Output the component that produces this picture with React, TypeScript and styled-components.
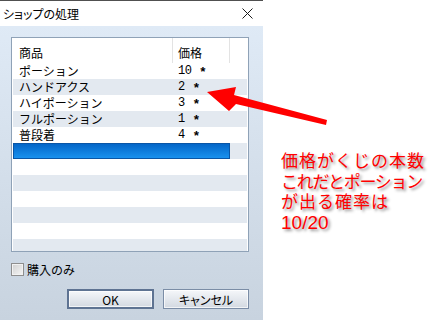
import React from "react";
import styled, { createGlobalStyle } from "styled-components";

const Global = createGlobalStyle`
  html, body { margin: 0; padding: 0; background: #ffffff; }
  body { width: 446px; height: 320px; overflow: hidden; }
`;

const UI_FONT = `"Noto Sans CJK JP", "Noto Sans", sans-serif`;

const Page = styled.div`
  position: relative;
  display: flex;
  width: 446px;
  height: 320px;
  font-family: ${UI_FONT};
  color: #000;
`;

const Dialog = styled.div`
  width: 263px;
  height: 320px;
  box-sizing: border-box;
  border-top: 1px solid #505050;
  display: flex;
  flex-direction: column;
`;

const TitleBar = styled.div`
  height: 25px;
  flex: none;
  background: #ffffff;
  display: flex;
  align-items: center;
  justify-content: space-between;
  padding: 0 10px 0 3px;
`;

const Title = styled.span`
  font-size: 12px;
  font-feature-settings: "palt";
  line-height: 1;
  margin-top: 1px;
`;

const Body = styled.div`
  flex: 1;
  background: linear-gradient(#dfeaf6, #c8d3df);
  padding: 11px 14px 0 11px;
  display: flex;
  flex-direction: column;
`;

const List = styled.div`
  height: 215px;
  box-sizing: border-box;
  border: 1px solid #8fa2b7;
  background: #ffffff;
  padding: 0 1px;
  overflow: hidden;
`;

const Columns = `
  display: grid;
  grid-template-columns: 160px 57px 1fr;
`;

const Header = styled.div`
  ${Columns};
  height: 25px;
`;

const HeadCell = styled.div<{ $pad: number; $line?: boolean }>`
  display: flex;
  align-items: center;
  padding: 3px 0 0 ${(p) => p.$pad}px;
  font-size: 12px;
  border-right: ${(p) => (p.$line ? "1px solid #e3e3e3" : "none")};
`;

const Row = styled.div<{ $alt: boolean }>`
  ${Columns};
  height: 16px;
  flex: none;
  background: ${(p) => (p.$alt ? "#e3e9f0" : "#ffffff")};
`;

const Cell = styled.div<{ $pad: number }>`
  display: flex;
  align-items: center;
  padding-left: ${(p) => p.$pad}px;
  font-size: 12px;
  line-height: 16px;
  white-space: nowrap;
`;

const Price = styled(Cell)`
  font-family: "Liberation Mono", "DejaVu Sans Mono", monospace;
  font-size: 12px;
  letter-spacing: -0.5px;
`;

const Star = styled.span`
  position: relative;
  top: 2px;
  font-weight: bold;
  font-size: 13px;
  margin-left: 1px;
`;

const Selection = styled.div`
  grid-column: 1 / 3;
  box-sizing: border-box;
  border: 1px solid #0a56a6;
  background: linear-gradient(#0466c8, #1991ee);
`;

const CheckRow = styled.label`
  display: flex;
  align-items: center;
  gap: 3px;
  margin-top: 11px;
  font-size: 12px;
  height: 13px;
`;

const CheckBox = styled.span`
  width: 13px;
  height: 13px;
  box-sizing: border-box;
  border: 1px solid #8e8e8e;
  background: linear-gradient(135deg, #d0d0d0, #f6f6f6);
  box-shadow: inset 0 0 0 1px #f2f2f2;
`;

const Buttons = styled.div`
  display: flex;
  justify-content: flex-end;
  gap: 9px;
  margin-top: 13px;
`;

const Button = styled.button<{ $default?: boolean; $w: number }>`
  width: ${(p) => p.$w}px;
  height: 20px;
  box-sizing: border-box;
  padding: 0;
  font-family: ${UI_FONT};
  font-size: 12px;
  font-feature-settings: "palt";
  color: #000;
  border: ${(p) => (p.$default ? "2px solid #5e7392" : "1px solid #7b8da6")};
  background: linear-gradient(#f5f7fa, #d3d9e1);
  box-shadow: inset 0 0 0 1px rgba(255, 255, 255, 0.7);
  display: flex;
  align-items: center;
  justify-content: center;
`;

const Aside = styled.div`
  padding: 150px 0 0 18px;
  font-family: "Noto Sans CJK JP", sans-serif;
  font-size: 17px;
  line-height: 20.5px;
  letter-spacing: 1px;
  color: #ff0000;
  text-shadow: 2px 2px 3px rgba(0, 0, 0, 0.45);
  white-space: nowrap;
`;

const Line = styled.div<{ $tight?: boolean }>`
  height: 20.5px;
  letter-spacing: ${(p) => (p.$tight ? "-1.3px" : "1px")};
`;

const Latin = styled.span`
  font-family: "Liberation Sans", Arial, sans-serif;
  font-size: 19px;
  letter-spacing: 0;
`;

const Overlay = styled.svg`
  position: absolute;
  left: 0;
  top: 0;
  pointer-events: none;
`;

const items: [string, string][] = [
  ["ポーション", "10"],
  ["ハンドアクス", "2"],
  ["ハイポーション", "3"],
  ["フルポーション", "1"],
  ["普段着", "4"],
];

export default function App() {
  const empties = Array.from({ length: 6 }, (_, i) => i);
  return (
    <Page>
      <Global />
      <Dialog>
        <TitleBar>
          <Title>ショップの処理</Title>
          <svg width="11" height="11" viewBox="0 0 11 11">
            <path d="M0.5 0.5 L10.5 10.5 M10.5 0.5 L0.5 10.5" stroke="#1a1a1a" strokeWidth="1" />
          </svg>
        </TitleBar>
        <Body>
          <List>
            <Header>
              <HeadCell $pad={6} $line>商品</HeadCell>
              <HeadCell $pad={5} $line>価格</HeadCell>
              <HeadCell $pad={0} />
            </Header>
            {items.map(([name, price], i) => (
              <Row key={name} $alt={i % 2 === 1}>
                <Cell $pad={6}>{name}</Cell>
                <Price $pad={5}>
                  {price}&nbsp;<Star>*</Star>
                </Price>
                <Cell $pad={0} />
              </Row>
            ))}
            <Row $alt>
              <Selection />
              <Cell $pad={0} />
            </Row>
            {empties.map((i) => (
              <Row key={i} $alt={i % 2 === 1}>
                <Cell $pad={0} />
              </Row>
            ))}
          </List>
          <CheckRow>
            <CheckBox />
            購入のみ
          </CheckRow>
          <Buttons>
            <Button $default $w={87}>OK</Button>
            <Button $w={86}>キャンセル</Button>
          </Buttons>
        </Body>
      </Dialog>
      <Aside>
        <Line>価格がくじの本数</Line>
        <Line $tight>これだとポーション</Line>
        <Line>が出る確率は</Line>
        <Line>
          <Latin>10/20</Latin>
        </Line>
      </Aside>
      <Overlay width="446" height="320" viewBox="0 0 446 320">
        <polygon
          points="207,92 236,87 234,95 327,120 326,125 236,104 229,111"
          fill="#ff0000"
        />
      </Overlay>
    </Page>
  );
}
